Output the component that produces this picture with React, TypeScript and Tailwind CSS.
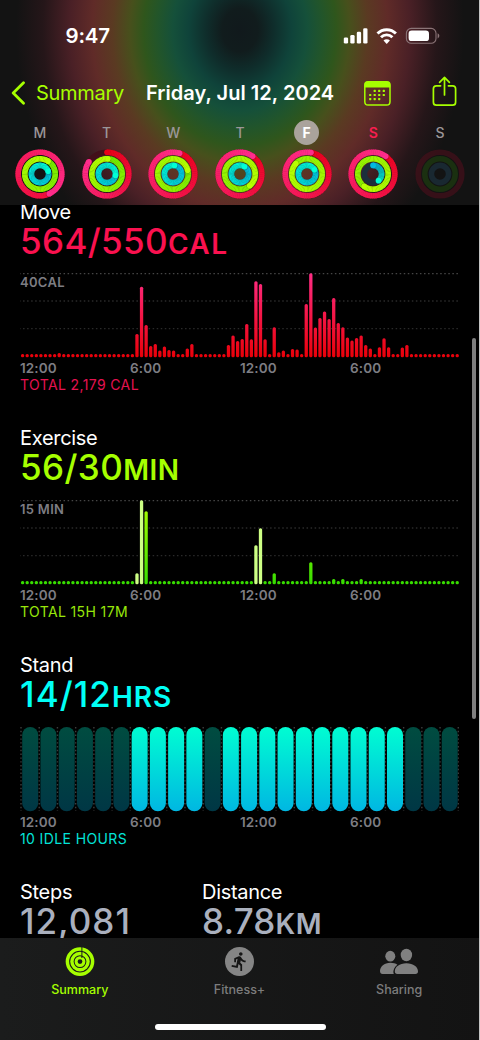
import React from 'react';
import { MdDirectionsRun } from 'react-icons/md';

type RGB = [number, number, number];

const PALETTE: { track: string; from: RGB; to: RGB }[] = [
    { track: '#42101a', from: [232, 0, 24], to: [255, 45, 140] },
    { track: '#1d3a10', from: [110, 232, 0], to: [184, 255, 0] },
    { track: '#1b2f3c', from: [0, 184, 226], to: [0, 255, 214] },
];

const RADII = [21.8, 15.2, 8.6];

// Progress per ring: move, exercise, stand
const DAYS: { label: string; rings: number[] }[] = [
    { label: 'M', rings: [1.43, 1.09, 1.2] },
    { label: 'T', rings: [0.845, 1.01, 1.28] },
    { label: 'W', rings: [1.05, 1.21, 1.03] },
    { label: 'T', rings: [1.1, 1.39, 1.09] },
    { label: 'F', rings: [1.03, 1.87, 1.17] },
    { label: 'S', rings: [1.1, 1.6, 0.39] },
    { label: 'S', rings: [0, 0, 0] },
];

const MOVE: Record<number, number> = {
    8: 4.3, 25: 23.3, 26: 70.6, 27: 32.3, 28: 11.3, 29: 13.3, 30: 6.7, 31: 10.7, 32: 7.3, 33: 6.7,
    36: 8.7, 37: 13.3, 45: 12.3, 46: 21.7, 47: 16.3, 48: 18.3, 49: 33.3, 50: 18, 51: 76, 52: 73.3,
    53: 18, 55: 30, 56: 5, 57: 6.7, 59: 8.3, 60: 7.7, 62: 53.3, 63: 84, 64: 29.7, 65: 39.3, 66: 45.7,
    67: 38.3, 68: 59.3, 69: 34.3, 70: 30, 71: 19.7, 72: 16.7, 73: 19.3, 74: 21.7, 75: 12.3, 76: 8.7,
    78: 10, 79: 19, 80: 10, 83: 9.7, 84: 12.3,
};

const EXERCISE: Record<number, number> = {
    25: 11, 26: 84, 27: 73, 51: 39, 52: 56, 55: 11, 63: 22, 68: 5.3, 70: 5.3, 74: 5.3,
};

const STOOD = [6, 7, 8, 9, 11, 12, 13, 14, 15, 16, 17, 18, 19, 20];

const point = (r: number, turn: number) => {
    const a = turn * 2 * Math.PI - Math.PI / 2;
    return { x: 25 + r * Math.cos(a), y: 25 + r * Math.sin(a) };
};

const mix = (from: RGB, to: RGB, t: number) =>
    `rgb(${from.map((v, i) => Math.round(v + (to[i] - v) * t)).join(',')})`;

const Ring: React.FC<{ index: number; progress: number }> = ({ index, progress }) => {
    const r = RADII[index];
    const { track, from, to } = PALETTE[index];
    const start = Math.max(0, progress - 1);
    const steps = 72;
    const span = progress - start;
    const end = point(r, progress);
    const shade = point(r, progress + 0.5 / (2 * Math.PI * r));
    const first = point(r, 0);

    return (
        <g fill="none" strokeWidth={5.6}>
            <circle cx={25} cy={25} r={r} stroke={track} />
            {progress > 0 && progress < 1 && <circle cx={first.x} cy={first.y} r={2.8} fill={mix(from, to, 0)} strokeWidth={0} />}
            {progress > 0 && Array.from({ length: steps }, (_, i) => {
                const a = start + (span * i) / steps;
                const p = point(r, a);
                const q = point(r, a + (span * 1.25) / steps);
                return <path key={i} d={`M${p.x} ${p.y}A${r} ${r} 0 0 1 ${q.x} ${q.y}`} stroke={mix(from, to, a / progress)} />;
            })}
            {progress > 0 && (
                <>
                    {progress >= 1 && <circle cx={shade.x} cy={shade.y} r={2.8} fill="#000" fillOpacity={0.28} strokeWidth={0} />}
                    <circle cx={end.x} cy={end.y} r={2.8} fill={mix(from, to, 1)} strokeWidth={0} />
                </>
            )}
        </g>
    );
};

const Rings: React.FC<{ rings: number[] }> = ({ rings }) => (
    <svg width="50" height="50" viewBox="0 0 50 50" className={rings[0] === 0 ? 'opacity-75' : ''}>
        {rings.map((p, i) => <Ring key={i} index={i} progress={p} />)}
    </svg>
);

const BarChart: React.FC<{ id: string; data: Record<number, number>; top: string; bottom: string; light?: number[] }> = ({ id, data, top, bottom, light = [] }) => (
    <svg width="440" height="86" viewBox="0 0 440 86" className="block">
        <defs>
            <linearGradient id={id} gradientUnits="userSpaceOnUse" x1="0" y1="0" x2="0" y2="85">
                <stop offset="0" stopColor={top} />
                <stop offset="1" stopColor={bottom} />
            </linearGradient>
        </defs>
        {[0.5, 28, 55.7].map((y, i) => (
            <line key={y} x1="-1" x2="440" y1={y} y2={y} stroke={i === 0 ? '#464646' : '#2a2a2a'} strokeWidth="1.3" strokeDasharray="1.5 2.55" />
        ))}
        {Array.from({ length: 96 }, (_, i) => {
            const h = data[i] ?? 3.3;
            return (
                <rect
                    key={i}
                    x={0.95 + i * 4.575}
                    y={84.3 - h}
                    width="3.3"
                    height={h}
                    rx="1.5"
                    fill={light.includes(i) ? '#cdff85' : `url(#${id})`}
                />
            );
        })}
    </svg>
);

const StandChart: React.FC = () => (
    <svg width="440" height="86" viewBox="0 0 440 86" className="block">
        <defs>
            <linearGradient id="stood" x1="0" y1="0" x2="0" y2="1">
                <stop offset="0" stopColor="#00fdd2" />
                <stop offset="1" stopColor="#00b7e2" />
            </linearGradient>
            <linearGradient id="idle" x1="0" y1="0" x2="0" y2="1">
                <stop offset="0" stopColor="#004c40" />
                <stop offset="1" stopColor="#003745" />
            </linearGradient>
        </defs>
        {Array.from({ length: 25 }, (_, i) => (
            <line key={i} x1={1 + i * 18.22} x2={1 + i * 18.22} y1="0" y2="84" stroke="#3d3d3d" strokeWidth="1.4" strokeDasharray="1.4 2.4" />
        ))}
        {Array.from({ length: 24 }, (_, i) => (
            <rect key={i} x={2.2 + i * 18.24} y="0" width="16" height="84.3" rx="8" fill={STOOD.includes(i) ? 'url(#stood)' : 'url(#idle)'} />
        ))}
    </svg>
);

interface SectionProps {
    title: string;
    value: string;
    valueClass: string;
    unit: string;
    unitClass: string;
    color: string;
    total: string;
    totalClass: string;
    scale?: string;
    children: React.ReactNode;
}

const Section: React.FC<SectionProps> = ({ title, value, valueClass, unit, unitClass, color, total, totalClass, scale, children }) => (
    <section className="h-[226.8px]">
        <h2 className="h-[20px] text-[20px] leading-[20px] tracking-[-0.3px] text-white">{title}</h2>
        <p className={`flex h-[42px] items-baseline text-[35px] font-medium leading-[38px] ${color}`}>
            <span className={valueClass}>{value}</span>
            <span className={`text-[28px] font-semibold ${unitClass}`}>{unit}</span>
        </p>
        <div className="relative mt-[9.3px]">
            {children}
            {scale && <span className="absolute left-0 top-[2px] text-[13px] font-semibold leading-[14px] tracking-[0.3px] text-[#7d7d83]">{scale}</span>}
        </div>
        <div className="mt-px flex text-[13.5px] font-semibold leading-[16px] tracking-[0.1px] text-[#7d7d83]">
            <span className="w-[110px]">12:00</span>
            <span className="w-[110px]">6:00</span>
            <span className="w-[110px]">12:00</span>
            <span>6:00</span>
        </div>
        <p className={`mt-px text-[14px] leading-[16px] tracking-[0.38px] ${totalClass}`}>{total}</p>
    </section>
);

const StatusBar: React.FC = () => (
    <div className="flex h-[72px] items-center justify-between pl-[65.5px] pr-[40px]">
        <span className="text-[20.5px] font-semibold leading-none tracking-[-0.2px] text-white">9:47</span>
        <svg width="97" height="18" viewBox="0 0 97 18" fill="#fff">
            <rect x="0.8" y="10.5" width="4.3" height="6" rx="1.3" />
            <rect x="7.3" y="8" width="4.3" height="8.5" rx="1.3" />
            <rect x="13.8" y="4.8" width="4.3" height="11.7" rx="1.3" />
            <rect x="20.2" y="1.2" width="4.3" height="15.3" rx="1.3" />
            <g fill="none" stroke="#fff" strokeWidth="2.9">
                <path d="M34.5 6.6a13 13 0 0 1 18.4 0" />
                <path d="M38 10.3a8 8 0 0 1 11.4 0" />
            </g>
            <path d="M43.7 16.9l-3.2-3.3a4.6 4.6 0 0 1 6.4 0z" />
            <rect x="63.4" y="1.4" width="29.6" height="14.8" rx="4.8" fill="none" stroke="#8b7477" strokeWidth="1.1" />
            <rect x="65.6" y="3.5" width="20.4" height="10.6" rx="3.2" />
            <path d="M94.6 6.2v5.2c1-.4 1.7-1.4 1.7-2.6s-.7-2.2-1.7-2.6z" fill="#8b7477" />
        </svg>
    </div>
);

const CalendarIcon: React.FC = () => {
    const dots = [[10.7, 9.9], [15.2, 9.9], [19.8, 9.9], [6.2, 14], [10.7, 14], [15.2, 14], [19.8, 14], [6.2, 18.1], [10.7, 18.1], [15.2, 18.1]];
    return (
        <svg width="27" height="25" viewBox="0 0 27 25" fill="#a6ff00">
            <rect x="0.8" y="0.8" width="25.2" height="23.2" rx="3.3" fill="none" stroke="#a6ff00" strokeWidth="1.5" />
            <path d="M0.5 6.5V4a3.5 3.5 0 0 1 3.5-3.5h18.8a3.5 3.5 0 0 1 3.5 3.5v2.5z" />
            {dots.map(([x, y]) => <rect key={`${x}-${y}`} x={x - 1.1} y={y - 1.1} width="2.2" height="2.2" rx="0.6" />)}
        </svg>
    );
};

const ShareIcon: React.FC = () => (
    <svg width="25" height="31" viewBox="0 0 25 31" fill="none" stroke="#a6ff00" strokeWidth="1.7" strokeLinecap="round" strokeLinejoin="round">
        <path d="M8.6 9.8H4.4a3 3 0 0 0-3 3v13.4a3 3 0 0 0 3 3h16.2a3 3 0 0 0 3-3V12.8a3 3 0 0 0-3-3h-4.2" />
        <path d="M12.5 19V1.4M7.6 6.3l4.9-4.9 4.9 4.9" />
    </svg>
);

const Header: React.FC = () => (
    <header className="h-[205px] bg-[#131313] bg-[radial-gradient(ellipse_224px_270px_at_240px_30px,#11191c_0%,#111c1d_8%,#0f2d2b_15%,#0f433a_23%,#15503a_30%,#22552a_37%,#2f561c_43%,#47501c_49%,#5a3a22_57%,#602b28_66%,#4a2026_76%,#251619_88%,#131313_100%)]">
        <StatusBar />
        <div className="flex h-[42px] items-center">
            <svg width="14" height="24" viewBox="0 0 14 24" className="ml-[11px]" fill="none" stroke="#a6ff00" strokeWidth="2.8" strokeLinecap="round" strokeLinejoin="round">
                <path d="M12.5 1.8L2.2 12l10.3 10.2" />
            </svg>
            <button className="ml-[11px] w-[110px] text-left text-[20px] leading-none tracking-[-0.3px] text-[#a6ff00]">Summary</button>
            <h1 className="w-[218px] whitespace-nowrap text-[20px] font-semibold leading-none tracking-[0.04px] text-white">Friday, Jul 12, 2024</h1>
            <CalendarIcon />
            <div className="mb-[3px] ml-[41px]"><ShareIcon /></div>
        </div>
        <div className="grid w-[473.5px] grid-cols-7 pl-[6.5px] pt-[6px]">
            {DAYS.map((day, i) => (
                <div key={i} className="flex flex-col items-center">
                    <span
                        className={`flex size-[25px] items-center justify-center rounded-full text-[14px] ${
                            i === 4 ? 'bg-[#aaa39c] font-bold text-white' : i === 5 ? 'font-semibold text-[#fa1e50]' : 'font-medium text-[#9b9698]'
                        }`}
                    >
                        {day.label}
                    </span>
                    <div className="mt-[4.4px]"><Rings rings={day.rings} /></div>
                </div>
            ))}
        </div>
    </header>
);

const TabBar: React.FC = () => (
    <nav className="h-[102px] bg-linear-to-r from-[#1b1c1c] to-[#131313]">
        <div className="grid h-[60px] w-[479px] grid-cols-3 pt-[9px] text-[12.5px] font-medium leading-[16px] text-[#7d7d7d]">
            <div className="flex flex-col items-center gap-[5px] text-[#a6ff00]">
                <svg width="30" height="30" viewBox="0 0 30 30" fill="none" stroke="currentColor">
                    <circle cx="15" cy="14.6" r="12.6" strokeWidth="3.5" />
                    <circle cx="15" cy="14.6" r="8.1" strokeWidth="3.4" />
                    <circle cx="15" cy="14.6" r="3.9" strokeWidth="3" />
                    <path d="M16.9 0v11" stroke="#1b1c1c" strokeWidth="1" />
                </svg>
                <span>Summary</span>
            </div>
            <div className="flex flex-col items-center gap-[5px]">
                <div className="mb-px flex size-[29px] items-center justify-center rounded-full bg-[#858585] text-[#151515]">
                    <MdDirectionsRun size={21} />
                </div>
                <span>Fitness+</span>
            </div>
            <div className="flex flex-col items-center gap-[5px]">
                <svg width="40" height="30" viewBox="0 0 40 30" fill="#808080">
                    <ellipse cx="11.3" cy="9.2" rx="5" ry="5.4" />
                    <path d="M18.4 17.7c-1.8-1.2-4.3-1.9-7-1.9-6.2 0-10.4 4-10.4 8.2 0 2.1 1 2.9 2.6 2.9h11.2c-1.2-3 .4-6.7 3.6-9.2z" />
                    <path d="M15.8 24.3c0-4.300 4.600-8 11.600-8s11.600 3.700 11.600 8c0 1.800-.9 2.600-2.600 2.600h-18c-1.700 0-2.600-.8-2.600-2.600z" stroke="#161616" strokeWidth="1.2" paintOrder="stroke" />
                    <ellipse cx="27.4" cy="8" rx="5.700" ry="6.200" />
                </svg>
                <span>Sharing</span>
            </div>
        </div>
        <div className="ml-[155px] mt-[25.5px] h-[6.5px] w-[170.5px] rounded-full bg-white" />
    </nav>
);

const App: React.FC = () => {
    return (
        <div className="relative flex h-[1040px] w-[480px] flex-col overflow-hidden bg-black font-['Inter',sans-serif]">
            <Header />

            <main className="h-[733px] overflow-hidden pl-[20px]">
                <div className="-mt-[3.4px]">
                    <Section
                        title="Move"
                        value="564/550"
                        valueClass="tracking-[0.35px]"
                        unit="CAL"
                        unitClass="tracking-[1.5px]"
                        color="text-[#fa114f]"
                        total="TOTAL 2,179 CAL"
                        totalClass="text-[#e51250]"
                        scale="40CAL"
                    >
                        <BarChart id="move" data={MOVE} top="#ff2d86" bottom="#e90008" />
                    </Section>
                    <Section
                        title="Exercise"
                        value="56/30"
                        valueClass="tracking-[0.4px]"
                        unit="MIN"
                        unitClass="tracking-[0.5px]"
                        color="text-[#a6ff00]"
                        total="TOTAL 15H 17M"
                        totalClass="text-[#98e60a]"
                        scale="15 MIN"
                    >
                        <BarChart id="exercise" data={EXERCISE} top="#b0ff00" bottom="#35dc00" light={[25, 26, 51, 52]} />
                    </Section>
                    <Section
                        title="Stand"
                        value="14/12"
                        valueClass="tracking-[1.1px]"
                        unit="HRS"
                        unitClass="tracking-[0.9px]"
                        color="text-[#00fff6]"
                        total="10 IDLE HOURS"
                        totalClass="text-[#03e3d9]"
                    >
                        <StandChart />
                    </Section>
                    <div className="flex text-white">
                        <div className="w-[182px]">
                            <h2 className="h-[20px] text-[20px] leading-[20px] tracking-[-0.3px]">Steps</h2>
                            <p className="text-[35px] font-medium leading-[38px] tracking-[1px] text-[#aab0be]">12,081</p>
                        </div>
                        <div>
                            <h2 className="h-[20px] text-[20px] leading-[20px] tracking-[-0.3px]">Distance</h2>
                            <p className="flex items-baseline text-[35px] font-medium leading-[38px] text-[#aab0be]">
                                <span className="tracking-[0.2px]">8.78</span>
                                <span className="text-[28px] font-semibold tracking-[0.5px]">KM</span>
                            </p>
                        </div>
                    </div>
                </div>
            </main>

            <TabBar />

            {/* Scroll indicator */}
            <div className="absolute left-[471.5px] top-[338px] h-[381px] w-[4px] rounded-full bg-[#7f7f7f]" />
            <div className="absolute right-0 top-0 h-full w-px bg-[#c4c4c4]" />
        </div>
    );
};

export default App;
